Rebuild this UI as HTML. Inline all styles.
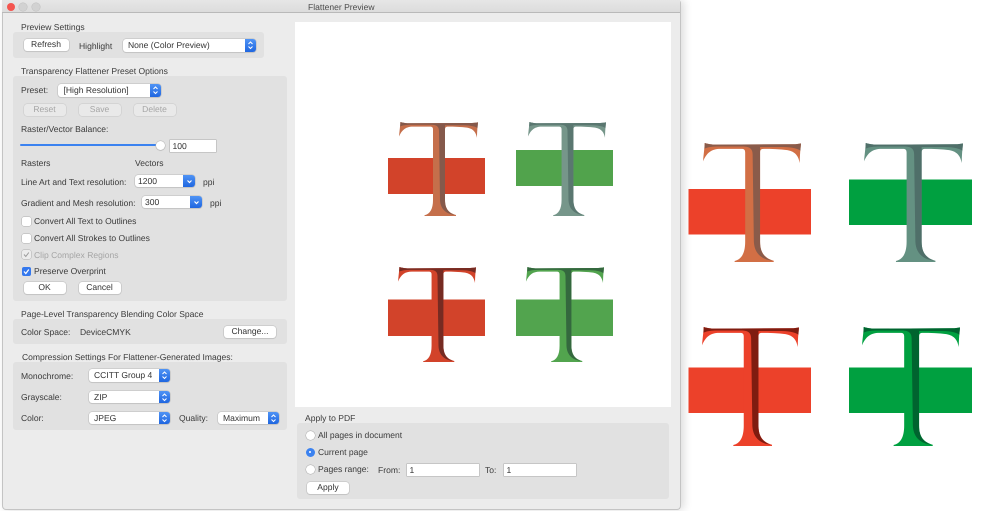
<!DOCTYPE html>
<html><head><meta charset="utf-8"><style>
html,body{margin:0;padding:0;background:#fff;width:999px;height:511px;overflow:hidden}
body{position:relative;font-family:"Liberation Sans",sans-serif;font-size:8.55px;color:#3a3a3a;text-rendering:geometricPrecision}
#blur{position:absolute;left:0;top:0;width:999px;height:511px;filter:blur(.35px)}
#win{position:absolute;left:1.5px;top:0;width:679px;height:510px;background:#ececec;border:1px solid #c4c4c4;border-top:0;box-sizing:border-box;border-radius:0 3px 4px 4px;box-shadow:3px 0 9px rgba(0,0,0,.14)}
#bar{position:absolute;left:2px;top:0;width:678px;height:13px;background:linear-gradient(#e6e6e6,#dcdcdc);border-bottom:1px solid #b9b9b9;box-sizing:border-box}
.a{position:absolute}
.t{position:absolute;white-space:nowrap;line-height:12px;height:12px;transform:translateY(-6px)}
.p{position:absolute;background:#e1e1e1;border-radius:3px}
.b{position:absolute;background:#fff;border-radius:3px;box-shadow:0 0 0 .5px #bbb,0 .5px 1px rgba(0,0,0,.3);text-align:center;height:12px;line-height:11.5px;color:#333}
.d{color:#a5a5a5;background:#e9e9e9;box-shadow:0 0 0 .5px #c8c8c8}
.s{position:absolute;background:#fff;border-radius:3px;box-shadow:0 0 0 .5px #bbb,0 .5px 1px rgba(0,0,0,.3);height:12.5px;line-height:12px;padding-left:5.5px;box-sizing:border-box;color:#333}
.s i{position:absolute;right:0;top:0;bottom:0;width:11px;background:linear-gradient(#4f93f5,#1f66e0);border-radius:0 3px 3px 0}
.s svg{position:absolute;right:0;top:0;width:11px;height:12.5px}
.i{position:absolute;background:#fff;box-shadow:0 0 0 .5px #aaa;height:12px;line-height:12.5px;padding-left:3px;box-sizing:border-box;color:#333}
.c{position:absolute;left:22px;width:8.5px;height:8.5px;background:#fff;border-radius:2px;box-shadow:0 0 0 .5px #b0b0b0}
.r{position:absolute;left:305.5px;width:9px;height:9px;background:#fff;border-radius:50%;box-shadow:0 0 0 .5px #aaa}
</style></head><body>
<div id="blur">
<svg class="a" style="left:0;top:0" width="999" height="511" viewBox="0 0 999 511">
<defs>
<symbol id="T" viewBox="0 0 79 94" preserveAspectRatio="none">
<path d="M1.400,0 C3,.5 6,1.200 9.500,1.300 L73,1 C75,1 77,.8 79,.3 C78.500,5 78,10 78,15.800 C77,11 75,6.800 68,5.600 C62,4.800 55,4.600 49,4.600 C47,4.600 46,5.300 46,7.500 L46,78 C46,87 50,91 57,93 L57,94 L25.500,94 L25.500,93.200 C31,92 34,87 34,78 L34,7.500 C34,5.300 33,4.600 31,4.600 L14,4.600 C7,4.600 3,7.500 0,14.500 C.5,9 1.200,4 1.400,0 Z"/>
<path fill="currentColor" d="M1.400,0 C3,.5 6,1.200 9.500,1.300 L73,1 C75,1 77,.8 79,.3 L78.500,6 C75,3.800 70,3.200 62,3.200 L46,3.200 L46,78 C46,87 50,91 56,93 C48,92 41.500,88 41,78 L40,9 C40,5 38,3 33,2.800 L12,2.800 C8,2.800 4,3.300 1.200,4.500 Z"/>
</symbol>
</defs>
</svg>
<div id="win"></div>
<div id="bar"></div>
<div class="a" style="left:6.500px;top:3px;width:8px;height:8px;border-radius:50%;background:#f4554f"></div>
<div class="a" style="left:19px;top:3px;width:8px;height:8px;border-radius:50%;background:#d2d2d2;box-shadow:0 0 0 .5px #bdbdbd"></div>
<div class="a" style="left:32px;top:3px;width:8px;height:8px;border-radius:50%;background:#d2d2d2;box-shadow:0 0 0 .5px #bdbdbd"></div>
<div class="t" style="left:308px;top:7px;color:#4a4a4a">Flattener Preview</div>

<div class="t" style="left:21px;top:27px">Preview Settings</div>
<div class="p" style="left:13px;top:32px;width:251px;height:26px"></div>
<div class="b" style="left:23.500px;top:39px;width:45px">Refresh</div>
<div class="t" style="left:79px;top:46px">Highlight</div>
<div class="s" style="left:122.500px;top:39px;width:133px">None (Color Preview)<i></i><svg viewBox="0 0 11 12.500"><path d="M3.500,5 L5.500,3 L7.500,5 M3.500,7.500 L5.500,9.500 L7.500,7.500" fill="none" stroke="#fff" stroke-width="1"/></svg></div>

<div class="t" style="left:21px;top:71px">Transparency Flattener Preset Options</div>
<div class="p" style="left:13px;top:76px;width:274px;height:225px"></div>
<div class="t" style="left:21px;top:90px">Preset:</div>
<div class="s" style="left:58px;top:84px;width:103px">[High Resolution]<i></i><svg viewBox="0 0 11 12.500"><path d="M3.500,5 L5.500,3 L7.500,5 M3.500,7.500 L5.500,9.500 L7.500,7.500" fill="none" stroke="#fff" stroke-width="1"/></svg></div>
<div class="b d" style="left:23.500px;top:104px;width:42px">Reset</div>
<div class="b d" style="left:78.500px;top:104px;width:42px">Save</div>
<div class="b d" style="left:133.500px;top:104px;width:42px">Delete</div>
<div class="t" style="left:21px;top:129px">Raster/Vector Balance:</div>
<div class="a" style="left:20px;top:144px;width:140px;height:2px;background:#3b82f0;border-radius:1px"></div>
<div class="a" style="left:155.500px;top:140.500px;width:9px;height:9px;background:#fff;border-radius:50%;box-shadow:0 0 0 .5px #b5b5b5,0 .5px 1px rgba(0,0,0,.3)"></div>
<div class="i" style="left:169.500px;top:139.500px;width:46px">100</div>
<div class="t" style="left:21px;top:163px">Rasters</div>
<div class="t" style="left:135px;top:163px">Vectors</div>
<div class="t" style="left:21px;top:182px">Line Art and Text resolution:</div>
<div class="s" style="left:135px;top:174.500px;width:60px;padding-left:3px">1200<i style="width:12px"></i><svg viewBox="0 0 11 12.500"><path d="M3.500,5.500 L5.500,7.500 L7.500,5.500" fill="none" stroke="#fff" stroke-width="1.200"/></svg></div>
<div class="t" style="left:203px;top:182px">ppi</div>
<div class="t" style="left:21px;top:202.500px">Gradient and Mesh resolution:</div>
<div class="s" style="left:142px;top:195.500px;width:60px;padding-left:3px">300<i style="width:12px"></i><svg viewBox="0 0 11 12.500"><path d="M3.500,5.500 L5.500,7.500 L7.500,5.500" fill="none" stroke="#fff" stroke-width="1.200"/></svg></div>
<div class="t" style="left:210px;top:202.500px">ppi</div>
<div class="c" style="top:217px"></div><div class="t" style="left:34px;top:221px">Convert All Text to Outlines</div>
<div class="c" style="top:234px"></div><div class="t" style="left:34px;top:238px">Convert All Strokes to Outlines</div>
<div class="c" style="top:250px;background:#ececec"><svg width="9" height="9" style="display:block"><path d="M2,4.500 L3.800,6.500 L6.800,2.500" fill="none" stroke="#9a9a9a" stroke-width="1"/></svg></div><div class="t" style="left:34px;top:254.500px;color:#a5a5a5">Clip Complex Regions</div>
<div class="c" style="top:267px;background:#3478ee;box-shadow:none"><svg width="9" height="9" style="display:block"><path d="M2,4.500 L3.800,6.500 L6.800,2.500" fill="none" stroke="#fff" stroke-width="1.200"/></svg></div><div class="t" style="left:34px;top:271px">Preserve Overprint</div>
<div class="b" style="left:23.500px;top:282px;width:42px">OK</div>
<div class="b" style="left:78.500px;top:282px;width:42px">Cancel</div>

<div class="t" style="left:21px;top:313.500px">Page-Level Transparency Blending Color Space</div>
<div class="p" style="left:13px;top:318.500px;width:274px;height:25.500px"></div>
<div class="t" style="left:21px;top:332px">Color Space:</div>
<div class="t" style="left:80px;top:332px">DeviceCMYK</div>
<div class="b" style="left:224px;top:326px;width:52px">Change...</div>

<div class="t" style="left:22px;top:357px">Compression Settings For Flattener-Generated Images:</div>
<div class="p" style="left:13px;top:362px;width:274px;height:68px"></div>
<div class="t" style="left:21px;top:376px">Monochrome:</div>
<div class="s" style="left:88.500px;top:369px;width:81.500px">CCITT Group 4<i></i><svg viewBox="0 0 11 12.500"><path d="M3.500,5 L5.500,3 L7.500,5 M3.500,7.500 L5.500,9.500 L7.500,7.500" fill="none" stroke="#fff" stroke-width="1"/></svg></div>
<div class="t" style="left:21px;top:397px">Grayscale:</div>
<div class="s" style="left:88.500px;top:390.500px;width:81.500px">ZIP<i></i><svg viewBox="0 0 11 12.500"><path d="M3.500,5 L5.500,3 L7.500,5 M3.500,7.500 L5.500,9.500 L7.500,7.500" fill="none" stroke="#fff" stroke-width="1"/></svg></div>
<div class="t" style="left:21px;top:418px">Color:</div>
<div class="s" style="left:88.500px;top:411.500px;width:81.500px">JPEG<i></i><svg viewBox="0 0 11 12.500"><path d="M3.500,5 L5.500,3 L7.500,5 M3.500,7.500 L5.500,9.500 L7.500,7.500" fill="none" stroke="#fff" stroke-width="1"/></svg></div>
<div class="t" style="left:179px;top:418px">Quality:</div>
<div class="s" style="left:217.500px;top:411.500px;width:61.500px">Maximum<i></i><svg viewBox="0 0 11 12.500"><path d="M3.500,5 L5.500,3 L7.500,5 M3.500,7.500 L5.500,9.500 L7.500,7.500" fill="none" stroke="#fff" stroke-width="1"/></svg></div>

<div class="a" style="left:295px;top:22px;width:376px;height:385px;background:#fff"></div>

<div class="t" style="left:305px;top:418px">Apply to PDF</div>
<div class="p" style="left:297px;top:423px;width:372px;height:75.500px"></div>
<div class="r" style="top:430.500px"></div><div class="t" style="left:318px;top:435px">All pages in document</div>
<div class="r" style="top:447.500px;background:#3b82f0;box-shadow:none"><div class="a" style="left:3.300px;top:3.300px;width:2.400px;height:2.400px;border-radius:50%;background:#fff"></div></div><div class="t" style="left:318px;top:452px">Current page</div>
<div class="r" style="top:464.500px"></div><div class="t" style="left:318px;top:469px">Pages range:</div>
<div class="t" style="left:378px;top:470px">From:</div>
<div class="i" style="left:406.500px;top:463.500px;width:72px;height:12.500px">1</div>
<div class="t" style="left:485px;top:470px">To:</div>
<div class="i" style="left:503.500px;top:463.500px;width:72px;height:12.500px">1</div>
<div class="b" style="left:307px;top:481.500px;width:42px">Apply</div>

<svg class="a" style="left:0;top:0" width="999" height="511" viewBox="0 0 999 511">
<rect x="388" y="158" width="97" height="36" fill="#d2432a"/>
<use href="#T" x="399" y="122" width="79" height="94" fill="#c56f4b" color="#85594b"/>
<rect x="516" y="150" width="97" height="36" fill="#51a34c"/>
<use href="#T" x="528" y="122" width="78" height="94" fill="#76968a" color="#5a7770"/>
<rect x="388" y="299.500" width="97" height="36.500" fill="#d2432a"/>
<use href="#T" x="398" y="267" width="78" height="95" fill="#d2432a" color="#762b22"/>
<rect x="516" y="299.500" width="97" height="36.500" fill="#52a44e"/>
<use href="#T" x="526" y="267" width="78" height="95" fill="#52a44e" color="#34683e"/>

<rect x="688.500" y="189" width="122.500" height="45.500" fill="#ec412a"/>
<use href="#T" x="703" y="143" width="98" height="119" fill="#d26f45" color="#8a5b4a"/>
<rect x="849" y="179.500" width="123" height="45.500" fill="#00a040"/>
<use href="#T" x="864" y="143" width="99" height="119" fill="#649182" color="#4f6f69"/>
<rect x="688.500" y="367.500" width="122.500" height="45.500" fill="#ec412a"/>
<use href="#T" x="702" y="327" width="97" height="119" fill="#ec412a" color="#7f1c10"/>
<rect x="849" y="367.500" width="123" height="45.500" fill="#00a040"/>
<use href="#T" x="862" y="327" width="98" height="119" fill="#00a040" color="#00642f"/>
</svg>
</div>
</body></html>
